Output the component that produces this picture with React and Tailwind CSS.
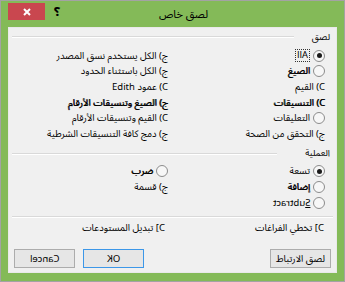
import React from 'react'

function Radio({ checked }) {
  return (
    <span className="flex h-[12px] w-[12px] shrink-0 items-center justify-center rounded-full border border-[#8c8c8c] bg-[#f7f7f7]">
      {checked && <span className="h-[5px] w-[5px] rounded-full bg-[#1b1b1b]" />}
    </span>
  )
}

function Item({ radio, checked, bold, children }) {
  return (
    <div className="flex h-[15.6px] items-center gap-[3px] whitespace-nowrap">
      {radio && <Radio checked={checked} />}
      <span className={'leading-[12px] ' + (bold ? '[text-shadow:0.6px_0_0_#000]' : '')}>{children}</span>
    </div>
  )
}

function Mirror({ children, className }) {
  return <span className={'inline-block -scale-x-100 ' + (className || '')}>{children}</span>
}

function GroupHeader({ label, gap }) {
  return (
    <div className={'flex h-[14px] items-center pr-[6px] pl-[3px] ' + gap}>
      <span className="text-[9px] leading-[11px]">{label}</span>
      <div className="flex-1 border-t border-b border-t-[#d9d9d9] border-b-white" />
    </div>
  )
}

function Button({ focused, children }) {
  return (
    <div
      className={
        'flex h-[19px] w-[61px] items-center justify-center whitespace-nowrap border bg-[#e6e6e6] leading-[12px] ' +
        (focused ? 'border-[#3c97e8]' : 'border-[#acacac]')
      }
    >
      {children}
    </div>
  )
}

export default function App() {
  return (
    <div className="flex h-[282px] w-[345px] flex-col border border-[#a3a3a3] bg-[#84ba58] font-['Noto_Sans_Arabic','DejaVu_Sans',sans-serif] text-black">
      {/* title bar */}
      <div dir="ltr" className="flex h-[26px] items-start">
        <div className="ml-[7px] mt-[2px] flex h-[17px] w-[37px] items-center justify-center bg-[#c9474f]">
          <svg width="8" height="8" viewBox="0 0 8 8">
            <path d="M1 1L7 7M7 1L1 7" stroke="white" strokeWidth="2" />
          </svg>
        </div>
        <span className="ml-[9px] mt-[5px] text-[12px] font-bold leading-[14px]">؟</span>
        <span dir="rtl" className="ml-auto mr-[136px] mt-[7px] text-[11px] leading-[14px]">لصق خاص</span>
      </div>

      {/* content */}
      <div dir="rtl" className="mx-[7px] flex h-[246px] flex-col border border-[#e9e9e9] bg-[#f0f0f0] pt-[2px] text-[9.5px]">
        <GroupHeader label="لصق" gap="gap-[18px]" />

        <div className="mt-[4px] grid grid-cols-[157px_1fr] pr-[11px]">
          <div>
            <Item radio checked>
              <span className="inline-block border border-dotted border-[#333] px-px leading-[11px]">
                <Mirror>All</Mirror>
              </span>
            </Item>
            <Item radio bold>الصيغ</Item>
            <Item>C) القيم</Item>
            <Item bold>C) التنسيقات</Item>
            <Item radio>التعليقات</Item>
            <Item>ج) التحقق من الصحة</Item>
          </div>
          <div>
            <Item>ج) الكل يستخدم نسق المصدر</Item>
            <Item>ج) الكل باستثناء الحدود</Item>
            <Item>C) عمود Edith</Item>
            <Item bold>ج) الصيغ وتنسيقات الأرقام</Item>
            <Item>C) القيم وتنسيقات الأرقام</Item>
            <Item>ج) دمج كافة التنسيقات الشرطية</Item>
          </div>
        </div>

        <div className="mt-[5px]">
          <GroupHeader label="العملية" gap="gap-[28px]" />
        </div>

        <div className="mt-[3px] grid grid-cols-[157px_1fr] pr-[11px]">
          <div>
            <Item radio checked>تسعة</Item>
            <Item radio bold>إضافة</Item>
            <Item radio>
              <Mirror>
                <span className="underline">S</span>ubtract
              </Mirror>
            </Item>
          </div>
          <div>
            <Item radio bold>ضرب</Item>
            <Item>ج) قسمة</Item>
          </div>
        </div>

        <div className="mx-[3px] mt-[6px] border-t border-b border-t-[#d9d9d9] border-b-white" />

        <div className="mt-[2px] grid h-[15px] grid-cols-[157px_1fr] items-center whitespace-nowrap pr-[12px] leading-[12px]">
          <span>C] تخطي الفراغات</span>
          <span className="pr-[2px]">C] تبديل المستودعات</span>
        </div>

        <div className="mt-[14px] flex justify-between px-[5px]">
          <Button>لصق الارتباط</Button>
          <div className="flex gap-[8px]">
            <Button focused>
              <Mirror>OK</Mirror>
            </Button>
            <Button>
              <Mirror>Cancel</Mirror>
            </Button>
          </div>
        </div>
      </div>
    </div>
  )
}
